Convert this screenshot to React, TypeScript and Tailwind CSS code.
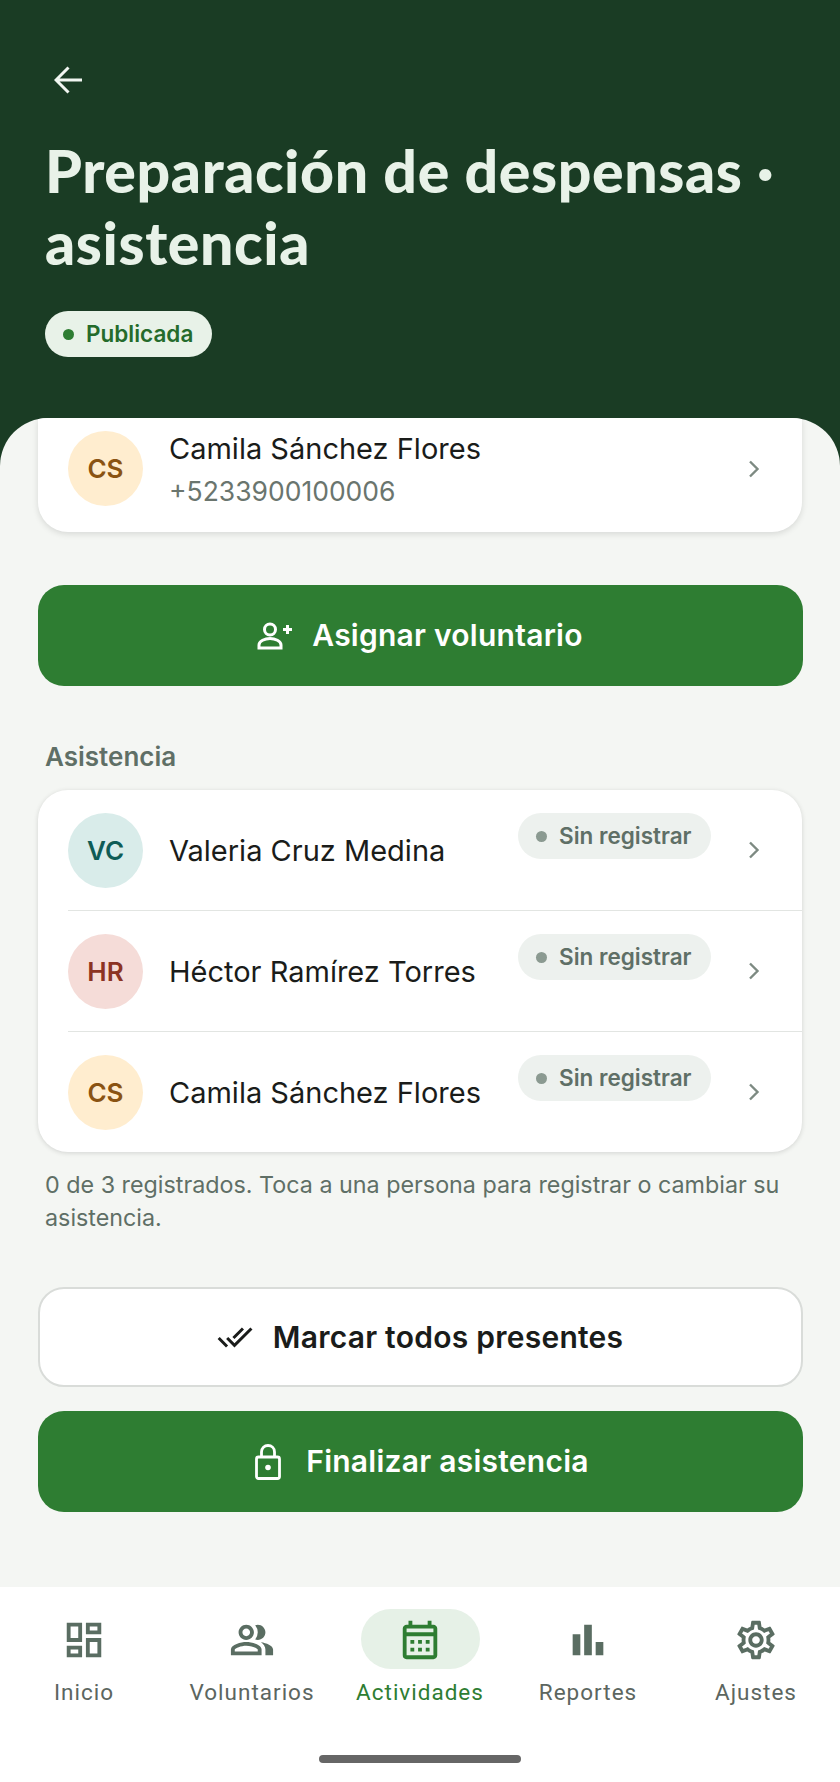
import React from 'react';
import { MdOutlineDashboard, MdOutlinePeopleAlt, MdOutlineCalendarMonth, MdBarChart, MdOutlineSettings, MdDoneAll } from 'react-icons/md';

const people = [
  { initials: 'VC', name: 'Valeria Cruz Medina', avatar: 'bg-[#d9ecea]', color: 'text-[#0f5c56]' },
  { initials: 'HR', name: 'Héctor Ramírez Torres', avatar: 'bg-[#f5dcd8]', color: 'text-[#8c3323]' },
  { initials: 'CS', name: 'Camila Sánchez Flores', avatar: 'bg-[#ffedcf]', color: 'text-[#8a5312]' },
];

const tabs = [
  { label: 'Inicio', icon: MdOutlineDashboard },
  { label: 'Voluntarios', icon: MdOutlinePeopleAlt },
  { label: 'Actividades', icon: MdOutlineCalendarMonth, active: true },
  { label: 'Reportes', icon: MdBarChart },
  { label: 'Ajustes', icon: MdOutlineSettings },
];

function Chevron() {
  return (
    <svg width="16" height="20" viewBox="0 0 16 20" fill="none" stroke="#7d8a82" strokeWidth="2.4" className="shrink-0">
      <path d="M4 2.5 L11.5 10 L4 17.5" />
    </svg>
  );
}

function Avatar({ initials, avatar, color }: { initials: string; avatar: string; color: string }) {
  return (
    <div className={`w-[75px] h-[75px] shrink-0 rounded-full flex items-center justify-center text-[26px] font-semibold ${avatar} ${color}`}>
      {initials}
    </div>
  );
}

function PrimaryButton({ icon, label, className }: { icon: React.ReactNode; label: string; className: string }) {
  return (
    <button className={`w-[765px] ml-[37.5px] rounded-[26px] bg-[#2e7d32] text-white flex items-center justify-center text-[30px] font-semibold tracking-[0.25px] ${className}`}>
      {icon}
      {label}
    </button>
  );
}

export default function App() {
  return (
    <div className="w-[840px] h-[1782px] flex flex-col overflow-hidden bg-[#f4f6f3] font-['Inter',sans-serif]">
      <header className="h-[470px] shrink-0 bg-[#1a3c24] pl-[45px] pt-[66px]">
        <svg width="28" height="28" viewBox="0 0 28 28" fill="none" stroke="#f1f6f1" strokeWidth="3" className="ml-[9px]">
          <path d="M28 14 H2 M14.5 1.5 L2 14 L14.5 26.5" />
        </svg>
        <h1 className="mt-[41px] w-[745px] text-[59px] leading-[72px] font-black text-[#e8f2e8] tracking-[0.6px] font-['Lato',sans-serif]">
          Preparación de despensas · asistencia
        </h1>
        <div className="mt-[32px] w-[167px] h-[46px] rounded-full bg-[#e8f2e8] flex items-center pl-[18px] gap-[12px] text-[#256b2b] text-[22.5px] font-semibold">
          <span className="w-[11px] h-[11px] rounded-full bg-[#2e7d32]" />
          Publicada
        </div>
      </header>

      <main className="flex-1 -mt-[52px] rounded-t-[48px] bg-[#f4f6f3] overflow-hidden">
        <div className="mx-[38px] h-[114px] bg-white rounded-b-[30px] shadow-[0_2px_6px_rgba(0,0,0,0.12)] flex items-start pt-[13px] pl-[30px] pr-[40px]">
          <Avatar initials="CS" avatar="bg-[#ffedcf]" color="text-[#8a5312]" />
          <div className="ml-[26px] flex-1 -mt-[3px]">
            <div className="text-[29px] leading-[42px] text-[#1a1c1a]">Camila Sánchez Flores</div>
            <div className="text-[26.5px] leading-[42px] text-[#6a756e]">+5233900100006</div>
          </div>
          <div className="mt-[28px]">
            <Chevron />
          </div>
        </div>

        <PrimaryButton
          className="mt-[53px] h-[101px] gap-[20px]"
          label="Asignar voluntario"
          icon={
            <svg width="35" height="28" viewBox="0 0 35 28" fill="none" stroke="currentColor" strokeWidth="3">
              <circle cx="13" cy="7.5" r="5.5" />
              <path d="M2 26 V23 C2 19 8 16.5 13 16.5 C18 16.5 24 19 24 23 V26 Z" />
              <path d="M26 7.5 H35 M30.5 3 V12" />
            </svg>
          }
        />

        <h2 className="mt-[54px] ml-[45px] text-[26px] leading-[34px] font-semibold text-[#5f6f66]">Asistencia</h2>
        <div className="mt-[16px] mx-[38px] bg-white rounded-[30px] shadow-[0_1px_5px_rgba(0,0,0,0.14)] overflow-hidden">
          {people.map((p, i) => (
            <div key={p.name} className={`ml-[30px] flex items-center pr-[40px] ${i > 0 ? 'border-t border-[#e2e5e2] h-[121px]' : 'h-[120px]'}`}>
              <Avatar initials={p.initials} avatar={p.avatar} color={p.color} />
              <div className="ml-[26px] pt-[2px] flex-1 text-[29px] text-[#1a1c1a]">{p.name}</div>
              <div className="self-start mt-[23px] mr-[35px] w-[193px] h-[46px] rounded-full bg-[#edf1ee] flex items-center pl-[18px] gap-[12px] text-[22.5px] font-semibold text-[#5f6f66]">
                <span className="w-[11px] h-[11px] rounded-full bg-[#8b9a91]" />
                Sin registrar
              </div>
              <Chevron />
            </div>
          ))}
        </div>
        <p className="mt-[16px] ml-[45px] mr-[40px] text-[23.3px] leading-[33px] text-[#5f6f66]">
          0 de 3 registrados. Toca a una persona para registrar o cambiar su asistencia.
        </p>

        <button className="mt-[53px] ml-[37.5px] w-[765px] h-[100px] rounded-[26px] bg-white border-2 border-[#d9dcd9] text-[#1a1c1a] flex items-center justify-center gap-[20px] text-[30px] font-semibold tracking-[0.25px]">
          <MdDoneAll size={36} />
          Marcar todos presentes
        </button>
        <PrimaryButton
          className="mt-[24px] h-[101px] gap-[25px] pl-[4px]"
          label="Finalizar asistencia"
          icon={
            <svg width="26" height="36" viewBox="0 0 26 36" fill="none" stroke="currentColor" strokeWidth="2.8" strokeLinejoin="round">
              <rect x="1.5" y="13" width="23" height="21.5" rx="2" />
              <path d="M6.5 13 V8 C6.5 4 9.5 1.5 13 1.5 C16.5 1.5 19.5 4 19.5 8 V13" />
              <circle cx="13" cy="23.5" r="2.8" fill="currentColor" stroke="none" />
            </svg>
          }
        />
      </main>

      <nav className="h-[195px] shrink-0 bg-white flex flex-col font-['Roboto',sans-serif]">
        <div className="grid grid-cols-5 pt-[22px]">
          {tabs.map(t => {
            const Icon = t.icon;
            return (
              <div key={t.label} className="flex flex-col items-center">
                <div className={`w-[119px] h-[60px] rounded-full flex items-center justify-center ${t.active ? 'bg-[#e6f1e7] text-[#2e7d32]' : 'text-[#5a6d62]'}`}>
                  <Icon size={46} className="mt-[2px]" />
                </div>
                <span className={`mt-[8px] text-[22.5px] leading-[30px] tracking-[1px] ${t.active ? 'text-[#2e7d32]' : 'text-[#5c6660]'}`}>
                  {t.label}
                </span>
              </div>
            );
          })}
        </div>
        <div className="mt-[48px] mx-auto w-[202px] h-[8px] rounded-full bg-[#666666]" />
      </nav>
    </div>
  );
}
